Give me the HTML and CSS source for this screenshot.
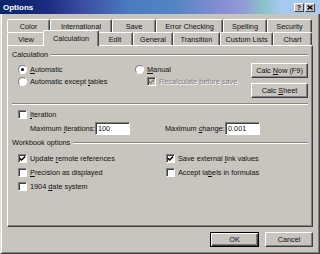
FILE: index.html
```html
<!DOCTYPE html>
<html lang="en">

<head>
    <meta charset="UTF-8">
    <title>Options</title>
    <link rel="stylesheet" href="styles.css">
</head>

<body>
    <div class="window">
        <div class="titlebar">
            <span class="title">Options</span>
            <div class="caption-btns">
                <span class="cap-btn help">?</span>
                <span class="cap-btn">
                    <svg width="6" height="5" viewBox="0 0 6 5"><path d="M0.5 0.5 L5.5 4.5 M5.5 0.5 L0.5 4.5" stroke="#000" stroke-width="1.3" fill="none"/></svg>
                </span>
            </div>
        </div>

        <div class="frame">
            <div class="tabs">
                <div class="tab-row back">
                    <div class="tab">Color</div>
                    <div class="tab">International</div>
                    <div class="tab">Save</div>
                    <div class="tab">Error Checking</div>
                    <div class="tab">Spelling</div>
                    <div class="tab">Security</div>
                </div>
                <div class="tab-row front">
                    <div class="tab">View</div>
                    <div class="tab active">Calculation</div>
                    <div class="tab">Edit</div>
                    <div class="tab">General</div>
                    <div class="tab">Transition</div>
                    <div class="tab">Custom Lists</div>
                    <div class="tab">Chart</div>
                </div>
            </div>

            <div class="panel">
                <div class="group-head"><span>Calculation</span></div>

                <div class="calc-row">
                    <div class="col-left">
                        <div class="opt"><span class="radio on"></span><span><u>A</u>utomatic</span></div>
                        <div class="opt"><span class="radio"></span><span>Automatic except <u>t</u>ables</span></div>
                    </div>
                    <div class="col-mid">
                        <div class="opt"><span class="radio"></span><span><u>M</u>anual</span></div>
                        <div class="opt sub disabled">
                            <span class="check checked">
                                <svg width="7" height="7" viewBox="0 0 7 7"><polyline points="0.8,3.2 2.6,5 6.2,1.4" stroke="#808080" stroke-width="1.4" fill="none"/></svg>
                            </span>
                            <span>Recalculate before save</span>
                        </div>
                    </div>
                    <div class="col-btns">
                        <button class="btn">Calc <u>N</u>ow (F9)</button>
                        <button class="btn">Calc <u>S</u>heet</button>
                    </div>
                </div>

                <div class="rule"></div>

                <div class="opt iter"><span class="check"></span><span><u>I</u>teration</span></div>

                <div class="field-row">
                    <span class="field-label">Maximum <u>i</u>terations:</span>
                    <span class="input">100</span>
                    <span class="field-label second">Maximum <u>c</u>hange:</span>
                    <span class="input">0.001</span>
                </div>

                <div class="group-head workbook"><span>Workbook options</span></div>

                <div class="options-grid">
                    <div class="opt">
                        <span class="check">
                            <svg width="7" height="7" viewBox="0 0 7 7"><polyline points="0.8,3.2 2.6,5 6.2,1.4" stroke="#000" stroke-width="1.4" fill="none"/></svg>
                        </span>
                        <span>Update <u>r</u>emote references</span>
                    </div>
                    <div class="opt">
                        <span class="check">
                            <svg width="7" height="7" viewBox="0 0 7 7"><polyline points="0.8,3.2 2.6,5 6.2,1.4" stroke="#000" stroke-width="1.4" fill="none"/></svg>
                        </span>
                        <span>Save external <u>l</u>ink values</span>
                    </div>
                    <div class="opt"><span class="check"></span><span><u>P</u>recision as displayed</span></div>
                    <div class="opt"><span class="check"></span><span>Accept la<u>b</u>els in formulas</span></div>
                    <div class="opt"><span class="check"></span><span>1904 <u>d</u>ate system</span></div>
                </div>
            </div>

            <div class="footer">
                <button class="btn default ok">OK</button>
                <button class="btn cancel">Cancel</button>
            </div>
        </div>
    </div>
</body>

</html>
```

FILE: styles.css
```css
* {
    margin: 0;
    padding: 0;
    box-sizing: border-box;
}

body {
    background-color: #c8c4be;
    font-family: "Liberation Sans", Arial, sans-serif;
    font-size: 7.3px;
    color: #111;
}

u {
    text-decoration: underline;
    text-underline-offset: 1px;
}

.window {
    width: 320px;
    height: 254px;
    display: flex;
    flex-direction: column;
}

/* title bar */

.titlebar {
    height: 14px;
    display: flex;
    align-items: center;
    padding: 0 5px 0 3px;
    background: linear-gradient(to right, #0a246a 0%, #1c2c80 15%, #3a4aa0 25%, #4a7abf 40%, #5585c4 55%, #8a8ed4 70%, #92a0d6 77%, #88c2c8 82%, #a6caf0 88%, #a6caf0 100%);
}

.title {
    color: #fff;
    font-weight: bold;
    font-size: 8px;
}

.caption-btns {
    margin-left: auto;
    display: flex;
    gap: 1px;
}

.cap-btn {
    width: 10px;
    height: 9px;
    background-color: #c8c4be;
    border: 1px solid;
    border-color: #fff #404040 #404040 #fff;
    display: flex;
    align-items: center;
    justify-content: center;
}

.cap-btn.help {
    font-weight: bold;
    font-size: 7px;
    line-height: 7px;
}

/* dialog body */

.frame {
    flex: 1;
    padding: 5px 6px 0 6px;
    border-left: 1px solid #e4e1dc;
    border-right: 1px solid #404040;
    border-bottom: 1px solid #404040;
    box-shadow: inset 1px 0 #fff, inset -1px -1px #808080;
}

.tab-row {
    display: flex;
    height: 13px;
}

.tab {
    height: 13px;
    display: flex;
    align-items: center;
    justify-content: center;
    white-space: nowrap;
    border: 1px solid;
    border-bottom: none;
    border-color: #fff #404040 #404040 #fff;
    border-radius: 2px 2px 0 0;
    box-shadow: inset -1px 0 #808080;
    background-color: #c8c4be;
}

.back .tab:nth-child(1) { width: 43px; }
.back .tab:nth-child(2) { width: 62px; }
.back .tab:nth-child(3) { width: 44px; }
.back .tab:nth-child(4) { width: 67px; }
.back .tab:nth-child(5) { width: 44px; }
.back .tab:nth-child(6) { width: 45px; }

.front .tab:nth-child(1) { width: 38px; }
.front .tab:nth-child(2) { width: 52px; }
.front .tab:nth-child(3) { width: 36px; }
.front .tab:nth-child(4) { width: 40px; }
.front .tab:nth-child(5) { width: 47px; }
.front .tab:nth-child(6) { width: 53px; }
.front .tab:nth-child(7) { width: 39px; }

.front .tab.active {
    width: 56px;
    height: 16px;
    margin: -2px -2px -1px;
    position: relative;
    z-index: 1;
}

.panel {
    height: 182px;
    padding: 4px 4px 0 4px;
    border: 1px solid;
    border-color: #fff #404040 #404040 #fff;
    box-shadow: inset -1px -1px #808080;
}

.group-head {
    display: flex;
    align-items: center;
    height: 10px;
    line-height: 10px;
}

.group-head::after {
    content: "";
    flex: 1;
    margin-left: 3px;
    border-top: 1px solid #8a8480;
    border-bottom: 1px solid #fff;
}

.calc-row {
    display: flex;
    margin-top: 3px;
}

.col-left {
    width: 117px;
    margin-left: 6px;
}

.col-mid {
    flex: 1;
}

.col-btns {
    width: 57px;
    display: flex;
    flex-direction: column;
    gap: 5px;
}

.opt {
    display: flex;
    align-items: center;
    height: 12px;
    white-space: nowrap;
}

.opt.sub {
    padding-left: 12px;
}

.opt.disabled {
    color: #808080;
    text-shadow: 1px 1px #fff;
}

.radio {
    width: 9px;
    height: 9px;
    margin-right: 3px;
    border-radius: 50%;
    border: 1px solid;
    border-color: #808080 #fff #fff #808080;
    background-color: #fff;
    display: flex;
    align-items: center;
    justify-content: center;
}

.radio.on::after {
    content: "";
    width: 3px;
    height: 3px;
    border-radius: 50%;
    background-color: #000;
}

.check {
    width: 9px;
    height: 9px;
    margin-right: 3px;
    border: 1px solid;
    border-color: #808080 #fff #fff #808080;
    box-shadow: inset 1px 1px #404040;
    background-color: #fff;
    display: flex;
    align-items: center;
    justify-content: center;
}

.check.checked {
    background-color: #c8c4be;
}

.btn {
    font-family: inherit;
    font-size: 7.3px;
    color: #111;
    height: 15px;
    background-color: #c8c4be;
    border: 1px solid;
    border-color: #fff #404040 #404040 #fff;
    box-shadow: inset -1px -1px #808080;
}

.btn.default {
    border-color: #000;
    box-shadow: inset 1px 1px #fff, inset -1px -1px #404040, inset -2px -2px #808080;
}

.rule {
    margin-top: 5px;
    border-top: 1px solid #8a8480;
    border-bottom: 1px solid #fff;
}

.iter {
    margin-left: 6px;
    margin-top: 3px;
}

.field-row {
    display: flex;
    align-items: center;
    height: 13px;
    margin-top: 2px;
    padding-left: 18px;
}

.field-label {
    width: 65px;
    white-space: nowrap;
}

.field-label.second {
    width: 60px;
    margin-left: 35px;
}

.input {
    width: 35px;
    height: 13px;
    line-height: 11px;
    padding-left: 2px;
    background-color: #fff;
    border: 1px solid;
    border-color: #808080 #fff #fff #808080;
    box-shadow: inset 1px 1px #404040;
}

.workbook {
    margin-top: 3px;
}

.options-grid {
    display: grid;
    grid-template-columns: 148px 1fr;
    row-gap: 2px;
    margin-top: 4px;
    margin-left: 6px;
}

.footer {
    display: flex;
    justify-content: flex-end;
    gap: 6px;
    margin-top: 5px;
}

.ok {
    width: 49px;
}

.cancel {
    width: 48px;
}
```
